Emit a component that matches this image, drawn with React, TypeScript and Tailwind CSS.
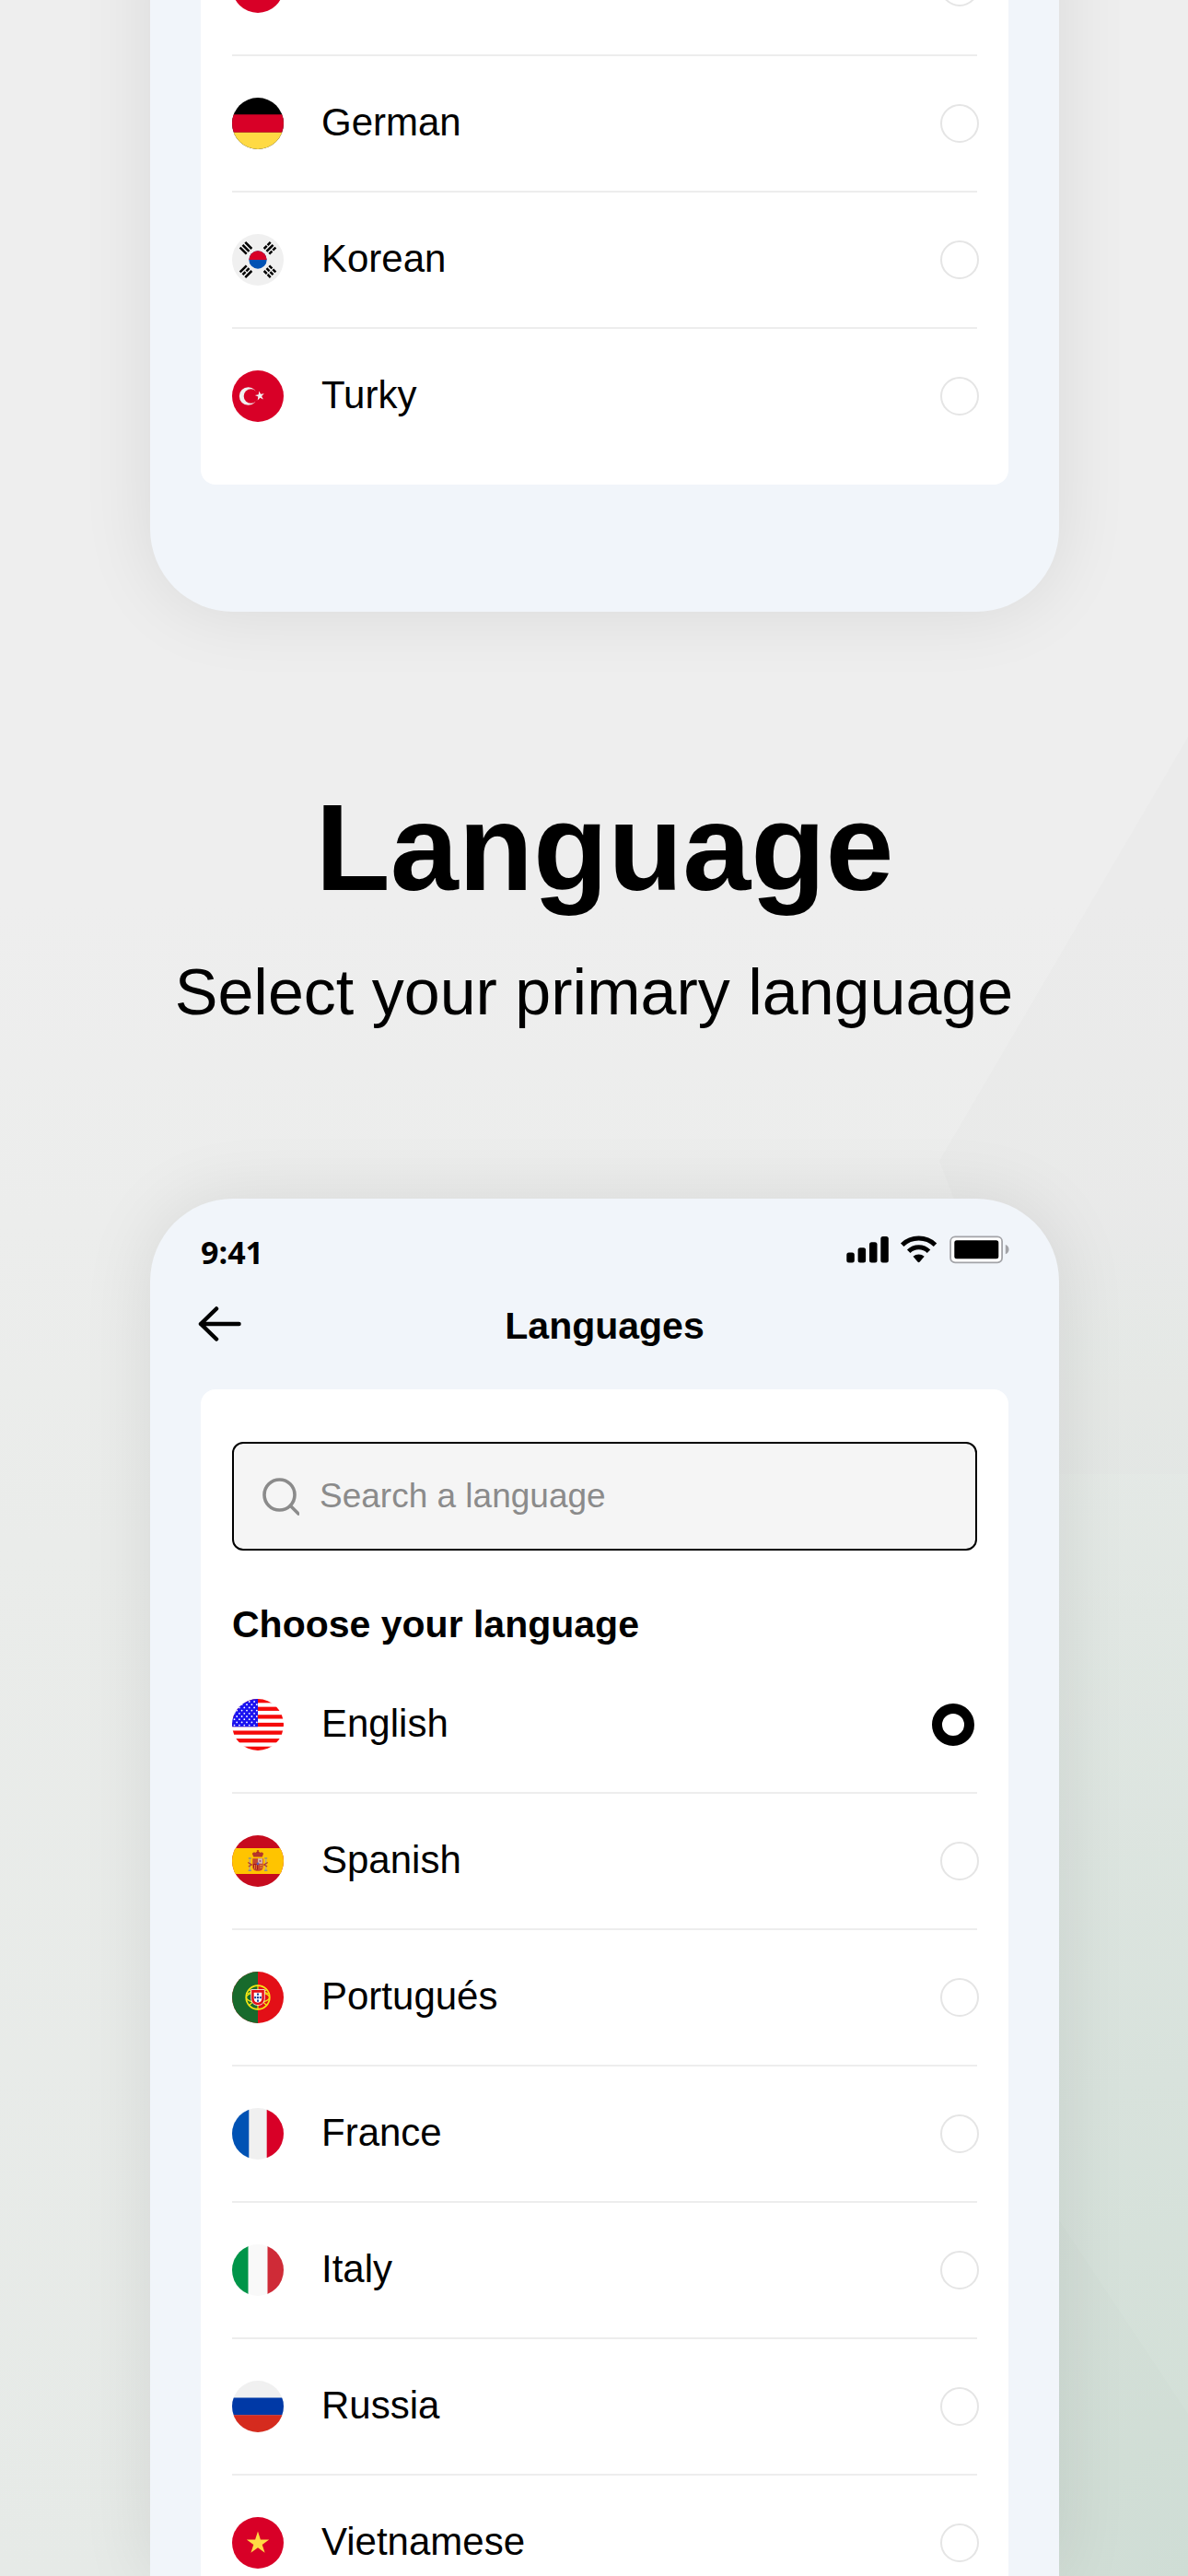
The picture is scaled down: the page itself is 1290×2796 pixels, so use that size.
import { useState, type ReactNode } from 'react'

type Language = {
    name: string
    flag: ReactNode
}

const UsaFlag = () => (
    <>
        <path fill="#fff" d="M0 0h56v56H0z" />
        {[0, 2, 4, 6, 8, 10, 12].map((i) => (
            <rect
                key={i}
                y={(i * 56) / 13}
                width="56"
                height={56 / 13}
                fill="#f50a0a"
            />
        ))}
        <path fill="#1a12f0" d="M0 0h28v30.2H0z" />
        {[0, 1, 2, 3, 4, 5, 6, 7, 8].map((row) =>
            [0, 1, 2, 3, 4].map((col) => (
                <circle
                    key={`${row}-${col}`}
                    cx={2.5 + col * 5.4 + (row % 2 ? 2.7 : 0)}
                    cy={3 + row * 3.2}
                    r="0.9"
                    fill="#fff"
                />
            ))
        )}
    </>
)

const SpainFlag = () => (
    <>
        <path fill="#c60b1e" d="M0 0h56v56H0z" />
        <path fill="#ffc400" d="M0 14h56v28H0z" />
        <path
            fill="#b5362a"
            d="M22.5 21.5c-1.5-2 1-3.6 2.8-2.6.6-.8 1.8-1.2 2.7-1.2s2.1.4 2.7 1.2c1.8-1 4.3.6 2.8 2.6l-.8 2h-9.4z"
        />
        <path stroke="#ad1519" strokeWidth="0.8" d="M28 16v3M26.8 17h2.4" />
        <path
            fill="#c4452f"
            d="M22.3 25.2h11.4v9c0 3-2.3 4.6-5.7 4.6s-5.7-1.6-5.7-4.6z"
        />
        <path fill="#d9b8a8" d="M28 25.2h5v5.6h-5z" />
        <path fill="#ad1519" d="M23 31h5v6.5c-3-.2-5-1.2-5-3.5z" />
        <path
            fill="none"
            stroke="#e8a23a"
            strokeWidth="0.8"
            d="M24.5 32v4.5M26.3 32v5M30 32.5h3M30 35h3"
        />
        <circle cx="28" cy="31" r="1.4" fill="#5b57b0" />
        <circle cx="30.5" cy="28" r="1.1" fill="#a2438c" />
        <path
            stroke="#b9a58a"
            strokeWidth="1.6"
            d="M19.3 26.5v11.5M36.7 26.5v11.5"
        />
        <path
            fill="none"
            stroke="#b5362a"
            strokeWidth="1.3"
            d="M17.3 29.5l4 2.5-3.5 2M38.7 29.5l-4 2.5 3.5 2"
        />
        <path
            stroke="#8a8c8f"
            strokeWidth="1.6"
            d="M17.8 25h3M35.2 25h3M17.6 38.2h3.4M35 38.2h3.4"
        />
    </>
)

const PortugalFlag = () => (
    <>
        <path fill="#e30f17" d="M0 0h56v56H0z" />
        <path fill="#186a2c" d="M0 0h28v56H0z" />
        <circle
            cx="28"
            cy="28"
            r="12.8"
            fill="none"
            stroke="#f5e614"
            strokeWidth="1.7"
        />
        <ellipse
            cx="28"
            cy="28"
            rx="12.5"
            ry="5.5"
            fill="none"
            stroke="#f5e614"
            strokeWidth="1.2"
        />
        <path
            fill="none"
            stroke="#f5e614"
            strokeWidth="1.2"
            d="M28 14.5v27M18.5 19.5l19 17M37.5 19.5l-19 17M17 24c6-4 16-4 22 0"
        />
        <path
            fill="#e30f17"
            stroke="#fff"
            strokeWidth="0.8"
            d="M20.7 19.5h14.6v9.5c0 4.5-3 7.5-7.3 7.5s-7.3-3-7.3-7.5z"
        />
        <path
            fill="#fff"
            d="M23.7 22.8h8.6v6.5c0 2.8-1.8 4.4-4.3 4.4s-4.3-1.6-4.3-4.4z"
        />
        <path
            fill="#22429a"
            d="M27 23.5h2v2.2h-2zM27 27h2v2.2h-2zM27 30.5h2v2.2h-2zM24.2 27h2v2.2h-2zM29.8 27h2v2.2h-2z"
        />
    </>
)

const FranceFlag = () => (
    <>
        <path fill="#f0f0f0" d="M0 0h56v56H0z" />
        <path fill="#0052b4" d="M0 0h18.3v56H0z" />
        <path fill="#d80027" d="M37.7 0H56v56H37.7z" />
    </>
)

const ItalyFlag = () => (
    <>
        <path fill="#f9f9f9" d="M0 0h56v56H0z" />
        <path fill="#009549" d="M0 0h17.5v56H0z" />
        <path fill="#cf2b37" d="M38.5 0H56v56H38.5z" />
    </>
)

const RussiaFlag = () => (
    <>
        <path fill="#f0f0f0" d="M0 0h56v56H0z" />
        <path fill="#0039a6" d="M0 18.5h56v19H0z" />
        <path fill="#d52b1e" d="M0 37.3h56V56H0z" />
    </>
)

const VietnamFlag = () => (
    <>
        <path fill="#d80027" d="M0 0h56v56H0z" />
        <path
            fill="#ffda44"
            d="M28 15.5l2.9 8.9h9.3l-7.5 5.5 2.9 8.9-7.6-5.5-7.6 5.5 2.9-8.9-7.5-5.5h9.3z"
        />
    </>
)

const GermanyFlag = () => (
    <>
        <path fill="#000" d="M0 0h56v56H0z" />
        <path fill="#d80027" d="M0 18.3h56v19.4H0z" />
        <path fill="#ffda44" d="M0 37.7h56V56H0z" />
    </>
)

const KoreaFlag = () => (
    <>
        <path fill="#f0f0f0" d="M0 0h56v56H0z" />
        <circle cx="28" cy="28" r="9.7" fill="#0052b4" />
        <path fill="#d80027" d="M18.3 28a9.7 9.7 0 0 1 19.4 0z" />
        <g stroke="#000" strokeWidth="2.5">
            <path
                d="M-5-4H5M-5 0H5M-5 4H5"
                transform="translate(15 15.3) rotate(45)"
            />
            <path
                d="M-5-4h4.4M.6-4H5M-5 0H5M-5 4h4.4M.6 4H5"
                transform="translate(41 15.3) rotate(-45)"
            />
            <path
                d="M-5-4H5M-5 0h4.4M.6 0H5M-5 4H5"
                transform="translate(15 40.7) rotate(-45)"
            />
            <path
                d="M-5-4h4.4M.6-4H5M-5 0h4.4M.6 0H5M-5 4h4.4M.6 4H5"
                transform="translate(41 40.7) rotate(45)"
            />
        </g>
    </>
)

const TurkeyFlag = () => (
    <>
        <path fill="#d80027" d="M0 0h56v56H0z" />
        <circle cx="17.6" cy="28" r="9.8" fill="#f0f0f0" />
        <circle cx="20.5" cy="28" r="7.8" fill="#d80027" />
        <path
            fill="#f0f0f0"
            d="M29.3 22.4l1.8 3.4 3.7-.5-2.7 2.7 1.8 3.4-3.5-1.7-2.7 2.7.6-3.8-3.4-1.7 3.8-.7z"
        />
    </>
)

const languages: Language[] = [
    { name: 'English', flag: <UsaFlag /> },
    { name: 'Spanish', flag: <SpainFlag /> },
    { name: 'Portugués', flag: <PortugalFlag /> },
    { name: 'France', flag: <FranceFlag /> },
    { name: 'Italy', flag: <ItalyFlag /> },
    { name: 'Russia', flag: <RussiaFlag /> },
    { name: 'Vietnamese', flag: <VietnamFlag /> },
    { name: 'German', flag: <GermanyFlag /> },
    { name: 'Korean', flag: <KoreaFlag /> },
    { name: 'Turky', flag: <TurkeyFlag /> },
]

type ListProps = {
    group: string
    items: Language[]
    selected: string
    onSelect: (name: string) => void
}

function LanguageList({ group, items, selected, onSelect }: ListProps) {
    return (
        <ul>
            {items.map(({ name, flag }) => (
                <li
                    key={name}
                    className="h-[148px] border-b-2 border-[#ededed] last:border-transparent"
                >
                    <label className="flex h-full items-center">
                        <svg
                            viewBox="0 0 56 56"
                            className="size-14 shrink-0 rounded-full"
                            aria-hidden="true"
                        >
                            {flag}
                        </svg>
                        <span className="ml-[41px] flex-1 pb-0.5 text-[42px] leading-[50px]">
                            {name}
                        </span>
                        <input
                            type="radio"
                            name={group}
                            value={name}
                            checked={selected === name}
                            onChange={() => onSelect(name)}
                            className="-mr-0.5 size-[42px] shrink-0 appearance-none rounded-full border-2 border-[#e5e5e5] bg-white checked:mr-[3px] checked:size-[46px] checked:border-[11px] checked:border-black"
                        />
                    </label>
                </li>
            ))}
        </ul>
    )
}

function StatusIcons() {
    return (
        <svg
            viewBox="0 0 176 30"
            className="h-[30px] w-[176px] overflow-visible"
            aria-hidden="true"
        >
            <rect x="0.3" y="18.5" width="8.5" height="11" rx="2.5" />
            <rect x="12.6" y="13.3" width="8.5" height="16.2" rx="2.5" />
            <rect x="25" y="7.3" width="8.5" height="22.2" rx="2.5" />
            <rect x="37.3" y="1" width="8.5" height="28.5" rx="2.5" />
            <g fill="none" stroke="#000" strokeWidth="5">
                <path d="M60.7 10.2a26 26 0 0 1 35.8 0" />
                <path d="M67.7 17.2a15.5 15.5 0 0 1 21.8 0" />
            </g>
            <path d="M72.5 22.8a9 9 0 0 1 12.2 0l-4.9 5.8q-1.2 1.2-2.4 0z" />
            <rect
                x="113.1"
                y="1.3"
                width="56"
                height="28"
                rx="5"
                fill="#fff"
                stroke="#a3a4a8"
                strokeWidth="1.8"
            />
            <rect x="117.3" y="5.3" width="48" height="20" rx="2.5" />
            <path fill="#a3a4a8" d="M172.8 10c5 1.5 5 8.8 0 10.3z" />
        </svg>
    )
}

function Backdrop() {
    return (
        <svg
            className="absolute inset-0 -z-10 size-full"
            viewBox="0 0 1290 2796"
            preserveAspectRatio="none"
            aria-hidden="true"
        >
            <defs>
                <linearGradient id="base" x1="0" y1="0" x2="0" y2="1">
                    <stop offset="0" stopColor="#eeeeee" />
                    <stop offset="0.35" stopColor="#eeeeee" />
                    <stop offset="0.6" stopColor="#eaecea" />
                    <stop offset="1" stopColor="#e6eae7" />
                </linearGradient>
                <radialGradient
                    id="mint"
                    gradientUnits="userSpaceOnUse"
                    cx="0"
                    cy="0"
                    r="1"
                    gradientTransform="translate(1290 2796) scale(1000 1550)"
                >
                    <stop offset="0" stopColor="#d1dfd6" />
                    <stop offset="0.35" stopColor="#d8e2dc" />
                    <stop offset="1" stopColor="#d8e2dc" stopOpacity="0" />
                </radialGradient>
            </defs>
            <path fill="url(#base)" d="M0 0h1290v2796H0z" />
            <path fill="url(#mint)" d="M0 0h1290v2796H0z" />
            <path
                fill="#dfe3e1"
                fillOpacity="0.2"
                d="M1290 800v800H1150L1020 1260z"
            />
            <path
                fill="#cbd4ce"
                fillOpacity="0.15"
                d="M1150 2410l140 210v176h-140z"
            />
        </svg>
    )
}

export default function App() {
    const [selected, setSelected] = useState('English')
    const [query, setQuery] = useState('')

    const visible = languages.filter(({ name }) =>
        name.toLowerCase().includes(query.toLowerCase())
    )

    return (
        <main className="relative isolate flex h-screen flex-col overflow-hidden font-['Liberation_Sans',Arial,sans-serif] text-black">
            <Backdrop />

            {/* tail of the list, scrolled to its last entries */}
            <section className="-mt-[87px] pr-[140px] pl-[163px]">
                <div className="rounded-b-[90px] bg-[#f1f5fa] px-[55px] pb-[138px] shadow-[0_0_80px_rgba(0,0,0,0.09)]">
                    <div className="rounded-b-2xl bg-white px-[34px] pb-[21px]">
                        <LanguageList
                            group="language-more"
                            items={languages.slice(-4)}
                            selected={selected}
                            onSelect={setSelected}
                        />
                    </div>
                </div>
            </section>

            <section className="pt-[181px] pb-[184px] text-center">
                <h1 className="pr-[140px] pl-[163px] text-[133px] leading-[150px] font-bold">
                    Language
                </h1>
                <p className="mt-[42px] text-[70px] leading-[80px]">
                    Select your primary language
                </p>
            </section>

            <section className="flex min-h-0 flex-1 flex-col pr-[140px] pl-[163px]">
                <div className="min-h-0 flex-1 rounded-t-[90px] bg-[#f1f5fa] px-[55px] pt-10 shadow-[0_0_80px_rgba(0,0,0,0.09)]">
                    <div className="flex items-end justify-between">
                        <span className="font-['Open_Sans',sans-serif] text-[34px] leading-6 font-bold">
                            9:41
                        </span>
                        <StatusIcons />
                    </div>

                    <header className="mt-10 grid h-14 grid-cols-[1fr_auto_1fr] items-center">
                        <button
                            type="button"
                            aria-label="Back"
                            className="justify-self-start"
                        >
                            <svg
                                viewBox="0 0 44 40"
                                className="h-10 w-11 overflow-visible"
                                fill="none"
                                stroke="#000"
                                strokeWidth="4.5"
                                strokeLinecap="round"
                                strokeLinejoin="round"
                            >
                                <path d="M41.5 18H0M17 1.5L0 18l17 16.5" />
                            </svg>
                        </button>
                        <h2 className="text-[41px] leading-[50px] font-bold">
                            Languages
                        </h2>
                    </header>

                    <div className="mt-[41px] rounded-t-2xl bg-white px-[34px] pt-[57px]">
                        <label className="flex h-[118px] items-center gap-[22px] rounded-xl border-2 border-black bg-[#f5f5f5] px-[31px]">
                            <svg
                                viewBox="0 0 40 42"
                                className="h-[42px] w-10 shrink-0"
                                fill="none"
                                stroke="#8b8b8b"
                                strokeWidth="3.6"
                                strokeLinecap="round"
                                aria-hidden="true"
                            >
                                <circle cx="18.5" cy="19.5" r="16.5" />
                                <path d="M30.5 31.5l8.5 8.5" />
                            </svg>
                            <input
                                type="text"
                                aria-label="Search a language"
                                placeholder="Search a language"
                                value={query}
                                onChange={(e) => setQuery(e.target.value)}
                                className="h-[50px] min-w-0 flex-1 bg-transparent text-[37px] outline-none placeholder:text-[#8b8b8b]"
                            />
                        </label>

                        <h3 className="mt-[55px] mb-[11px] text-[41px] leading-[50px] font-bold">
                            Choose your language
                        </h3>
                        <LanguageList
                            group="language"
                            items={visible}
                            selected={selected}
                            onSelect={setSelected}
                        />
                    </div>
                </div>
            </section>
        </main>
    )
}
